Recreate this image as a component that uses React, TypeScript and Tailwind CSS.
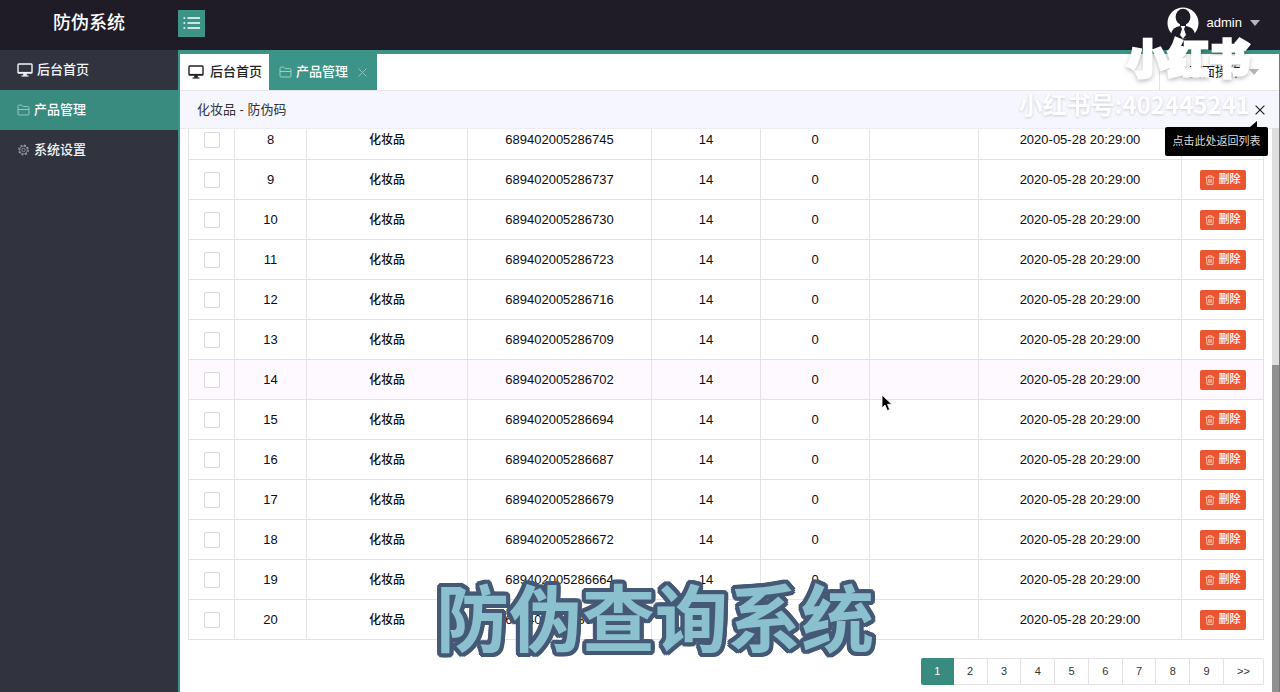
import type { ReactNode } from 'react'

type Row = { id: number; code: string }

const rows: Row[] = [
  { id: 8, code: '689402005286745' },
  { id: 9, code: '689402005286737' },
  { id: 10, code: '689402005286730' },
  { id: 11, code: '689402005286723' },
  { id: 12, code: '689402005286716' },
  { id: 13, code: '689402005286709' },
  { id: 14, code: '689402005286702' },
  { id: 15, code: '689402005286694' },
  { id: 16, code: '689402005286687' },
  { id: 17, code: '689402005286679' },
  { id: 18, code: '689402005286672' },
  { id: 19, code: '689402005286664' },
  { id: 20, code: '689402005286657' },
]

const hoveredId = 14
const pages = ['2', '3', '4', '5', '6', '7', '8', '9']

function MonitorIcon() {
  return (
    <svg width="16" height="14" viewBox="0 0 16 14" fill="none" stroke="currentColor">
      <rect x="1" y="1" width="14" height="9" rx="0.8" strokeWidth="1.4" />
      <path d="M1 9.5h14" strokeWidth="1.2" />
      <path d="M6.5 10.5h3v2h-3z" fill="currentColor" strokeWidth="0.6" />
      <path d="M4.5 13h7" strokeWidth="1.2" />
    </svg>
  )
}

function FolderIcon() {
  return (
    <svg width="13" height="12" viewBox="0 0 13 12" fill="none" stroke="currentColor" strokeWidth="0.9">
      <path d="M1 10V2.2Q1 1 2.2 1h2.400l1.500 1.600h4.700Q12 2.600 12 3.800V10q0 1-1 1H2q-1 0-1-1z" />
      <path d="M1 5.500h11" />
    </svg>
  )
}

function GearIcon() {
  return (
    <svg width="13" height="12" viewBox="0 0 12 12" fill="none" stroke="currentColor">
      <circle cx="6" cy="6" r="1.7" strokeWidth="0.8" />
      <circle cx="6" cy="6" r="3.9" strokeWidth="0.8" />
      <circle cx="6" cy="6" r="4.8" strokeWidth="1.3" strokeDasharray="1.9 1.87" />
    </svg>
  )
}

function ListIcon() {
  return (
    <svg width="17" height="14" viewBox="0 0 17 14" fill="none" stroke="currentColor" strokeWidth="1.7">
      <path d="M4.5 2H17M4.5 7H17M4.5 12H17" />
      <path d="M0.5 2h1.7M0.5 7h1.7M0.5 12h1.7" />
    </svg>
  )
}

function TrashIcon() {
  return (
    <svg width="10" height="10" viewBox="0 0 10 10" fill="none" stroke="currentColor" strokeWidth="0.9">
      <path d="M0.5 2.200h9M3.400 2V0.700h3.200V2M1.600 2.400l0.400 6.900h6l0.400-6.900M3.800 4v3.800M5 4v3.800M6.200 4v3.800" />
    </svg>
  )
}

function CloseIcon({ size, width }: { size: number; width: number }) {
  return (
    <svg width={size} height={size} viewBox="0 0 10 10" fill="none" stroke="currentColor" strokeWidth={width}>
      <path d="M0.600 0.600l8.800 8.800M9.400 0.600L0.600 9.400" />
    </svg>
  )
}

function Caret() {
  return (
    <svg width="10" height="6" viewBox="0 0 10 6" fill="currentColor">
      <path d="M0 0h10L5 6z" />
    </svg>
  )
}

function Avatar() {
  return (
    <svg width="32" height="32" viewBox="0 0 32 32">
      <circle cx="16" cy="16" r="15.5" fill="#fff" />
      <ellipse cx="16" cy="10" rx="7.400" ry="8.200" fill="#1f1c28" />
      <path d="M13 16h6v4h-6z" fill="#1f1c28" />
      <path d="M4 27q1.500-7 9-8h6q7.500 1 9 8-5 4.500-12 4.500T4 27z" fill="#1f1c28" />
      <path d="M13.600 19h4.800l-1.400 3 2 6-3 3.500-3-3.500 2-6z" fill="#fff" />
    </svg>
  )
}

function SideLink({ icon, label, active = false }: { icon: ReactNode; label: string; active?: boolean }) {
  return (
    <li>
      <a
        href="#"
        className={
          active
            ? 'flex h-10 items-center gap-1 bg-[#398b80] pl-[17px] text-[13px] font-medium text-white'
            : 'flex h-10 items-center gap-1 pl-[17px] text-[13px] font-medium text-gray-100'
        }
      >
        {icon}
        {label}
      </a>
    </li>
  )
}

function CodeTable() {
  return (
    <table className="-mt-2.5 w-full table-fixed border-collapse text-center text-[13px] text-[#0c0c0c]">
      <colgroup>
        <col className="w-[46px]" />
        <col className="w-[72px]" />
        <col className="w-[161px]" />
        <col className="w-[184px]" />
        <col className="w-[109px]" />
        <col className="w-[109px]" />
        <col className="w-[109px]" />
        <col className="w-[203px]" />
        <col className="w-[82px]" />
      </colgroup>
      <tbody className="[&_td]:border [&_td]:border-[#e4e2e4] [&_td]:p-0">
        {rows.map((row) => (
          <tr key={row.id} className={row.id === hoveredId ? 'h-10 bg-[#fdf9fe]' : 'h-10'}>
            <td>
              <input
                type="checkbox"
                aria-label={`选择 ${row.id}`}
                className="mx-auto block size-4 appearance-none rounded-xs border border-[#d8d6d8] bg-white"
              />
            </td>
            <td>{row.id}</td>
            <td className="text-xs font-medium">化妆品</td>
            <td>{row.code}</td>
            <td>14</td>
            <td>0</td>
            <td />
            <td>2020-05-28 20:29:00</td>
            <td>
              <button
                type="button"
                className="mx-auto flex h-5 w-[46px] items-center justify-center gap-1 rounded-xs bg-[#e95631] text-[11px] font-medium text-white"
              >
                <span className="text-[#fbd0c4]">
                  <TrashIcon />
                </span>
                删除
              </button>
            </td>
          </tr>
        ))}
      </tbody>
    </table>
  )
}

function Pagination() {
  return (
    <nav className="mt-[18px] ml-auto flex w-[343px] text-[11px] text-[#333]">
      <button type="button" className="h-[27px] flex-1 rounded-l-xs bg-[#398b80] text-white">
        1
      </button>
      {pages.map((page) => (
        <button key={page} type="button" className="h-[27px] flex-1 border-y border-r border-[#e4e2e4] bg-white">
          {page}
        </button>
      ))}
      <button type="button" className="h-[27px] w-10 rounded-r-xs border-y border-r border-[#e4e2e4] bg-white">
        &gt;&gt;
      </button>
    </nav>
  )
}

export default function App() {
  return (
    <div className="relative flex h-screen flex-col overflow-hidden bg-white font-['Liberation_Sans','Noto_Sans_CJK_SC',sans-serif]">
      <header className="flex h-[50px] shrink-0 items-center bg-[#1f1c28] pb-1 text-white">
        <h1 className="w-[178px] text-center text-lg font-medium">防伪系统</h1>
        <button type="button" aria-label="菜单" className="flex size-[27px] items-center justify-center bg-[#3b9487]">
          <ListIcon />
        </button>
        <button type="button" className="mr-5 ml-auto flex items-center gap-2 text-[13px]">
          <Avatar />
          admin
          <span className="text-[#b5b4b8]">
            <Caret />
          </span>
        </button>
      </header>

      <div className="flex min-h-0 flex-1">
        <aside className="w-[178px] shrink-0 bg-[#31343f]">
          <ul>
            <SideLink icon={<MonitorIcon />} label="后台首页" />
            <SideLink icon={<span className="text-[#9fc9c2]"><FolderIcon /></span>} label="产品管理" active />
            <SideLink icon={<span className="text-[#9a9ba1]"><GearIcon /></span>} label="系统设置" />
          </ul>
        </aside>

        <main className="flex min-w-0 flex-1 flex-col border-t-4 border-l-2 border-[#3b9487]">
          <div className="flex min-h-0 flex-1 flex-col border-r border-[#77777b]">
            <div className="flex h-[37px] shrink-0 border-b border-[#e6e6ea] text-[13px] text-[#222]">
              <a href="#" className="flex w-[89px] items-center gap-1.5 pl-2 font-medium">
                <MonitorIcon />
                后台首页
              </a>
              <a href="#" className="flex w-27 items-center gap-1 bg-[#3b9487] pl-2.5 font-medium text-white">
                <span className="text-[#a8d4cd]">
                  <FolderIcon />
                </span>
                产品管理
                <span className="ml-1.5 text-[#8fc0b9]">
                  <CloseIcon size={9} width={1.1} />
                </span>
              </a>
              <button type="button" className="ml-auto flex w-[120px] items-center justify-end gap-2 border-l border-[#e6e6ea] pr-5">
                页面操作
                <span className="text-[#b5b5b5]">
                  <Caret />
                </span>
              </button>
            </div>

            <div className="relative flex h-[37px] shrink-0 items-center justify-between bg-[#f6f6fe] pr-3.5 pl-[17px] text-[13px] text-[#333]">
              <h2>化妆品 - 防伪码</h2>
              <button type="button" aria-label="关闭" className="text-[#222]">
                <CloseIcon size={10} width={1.2} />
              </button>
              <div role="tooltip" className="absolute top-9 right-[11px] z-10 flex h-[29px] w-[103px] items-center justify-center rounded-xs bg-black text-[11px] whitespace-nowrap text-[#ddd]">
                点击此处返回列表
                <svg className="absolute -top-1.5 right-2.5" width="8" height="6" viewBox="0 0 8 6">
                  <path d="M7 0v6H0z" fill="#000" />
                </svg>
              </div>
            </div>

            <div className="flex min-h-0 flex-1">
              <div className="min-w-0 flex-1 overflow-hidden border-t border-[#ececf2] px-2">
                <CodeTable />
                <Pagination />
              </div>
              <div className="flex w-[7px] shrink-0 flex-col bg-[#dedede]">
                <div className="mt-auto h-[58%] bg-[#8f908f]" />
              </div>
            </div>
          </div>
        </main>
      </div>

      {/* mouse pointer */}
      <svg className="absolute top-[394px] left-[881px]" width="12" height="18" viewBox="0 0 12 18">
        <path d="M1 1v13l3-3 2.300 5.500 2.400-1L6.500 10.300h4.300z" fill="#000" stroke="#fff" strokeWidth="0.8" />
      </svg>

      <div className="pointer-events-none absolute top-7 right-[30px] z-20 flex flex-col items-end text-right font-['Noto_Sans_CJK_SC',sans-serif] font-black text-white">
        <span className="text-[41px] leading-[56px] [-webkit-text-stroke:3px_white] [filter:drop-shadow(0_2px_2px_rgba(0,0,0,0.25))]">小红书</span>
        <span className="text-2xl leading-10 font-bold opacity-90 [text-shadow:0_1px_3px_rgba(0,0,0,0.2)]">小红书号:402445241</span>
      </div>

      <p className="pointer-events-none absolute bottom-9 left-[436px] z-20 font-['Noto_Sans_CJK_SC',sans-serif] text-[73px] leading-[84px] font-bold whitespace-nowrap text-[#8bc0ce] [text-shadow:4px_0_#455977,-4px_0_#455977,0_4px_#455977,0_-4px_#455977,3px_3px_#455977,-3px_3px_#455977,3px_-3px_#455977,-3px_-3px_#455977,4px_2px_#455977,-4px_2px_#455977,4px_-2px_#455977,-4px_-2px_#455977,2px_4px_#455977,-2px_4px_#455977,2px_-4px_#455977,-2px_-4px_#455977]">
        防伪查询系统
      </p>
    </div>
  )
}
